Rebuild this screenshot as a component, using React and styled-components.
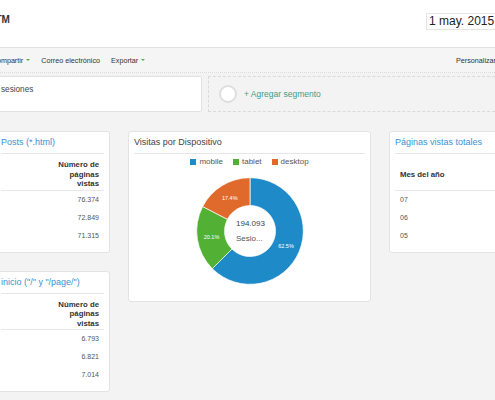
import React from 'react'
import styled, { createGlobalStyle } from 'styled-components'

const GlobalStyle = createGlobalStyle`
    html, body {
        margin: 0;
        padding: 0;
        background: #f3f3f3;
    }
    body {
        font-family: 'Liberation Sans', Arial, sans-serif;
        color: #333;
    }
`

const Viewport = styled.div`
    width: 495px;
    height: 400px;
    overflow: hidden;
    background: #f3f3f3;
`

const Header = styled.header`
    display: flex;
    align-items: flex-start;
    height: 47px;
    background: #ffffff;
    border-bottom: 1px solid #e2e2e2;
`

const Title = styled.h1`
    margin: 14px 0 0 -4.5px;
    font-size: 10px;
    line-height: 12px;
    font-weight: bold;
    color: #333;
`

const DateBox = styled.div`
    flex: 0 0 auto;
    width: 180px;
    height: 15px;
    margin: 13px -117px 0 auto;
    padding: 0 2px;
    border: 1px solid #e4e4e4;
    font-size: 12px;
    line-height: 15px;
    color: #222;
    white-space: nowrap;
    overflow: hidden;
`

const Toolbar = styled.nav`
    display: flex;
    align-items: center;
    height: 24px;
    background: #f5f5f5;
    border-bottom: 1px dotted #dcdcdc;
    font-size: 7.2px;
    color: #333;
    gap: 11px;
`

const ToolItem = styled.span`
    display: inline-flex;
    align-items: center;
    white-space: nowrap;
    margin-left: ${({ offset }) => offset || '0'};
    &:last-child {
        margin-left: auto;
        margin-right: -1px;
    }
`

const Caret = styled.i`
    display: inline-block;
    margin-left: 3px;
    border-left: 2px solid transparent;
    border-right: 2px solid transparent;
    border-top: 2.5px solid #5fae3e;
`

const SegmentRow = styled.div`
    display: flex;
    gap: 6px;
    padding-top: 3px;
`

const SegmentBox = styled.div`
    box-sizing: border-box;
    flex: 0 0 212px;
    height: 36px;
    margin-left: -10px;
    padding: 8px 0 0 10px;
    background: #fff;
    border: 1px solid #e2e2e2;
    border-radius: 2px;
    font-size: 8.2px;
    line-height: 10px;
    color: #444;
`

const AddSegment = styled.div`
    box-sizing: border-box;
    flex: 1;
    display: flex;
    align-items: center;
    gap: 7px;
    height: 36px;
    margin-right: -5px;
    padding-left: 10px;
    border: 1px dashed #dadada;
    font-size: 8.5px;
    color: #3f9d86;
`

const Ring = styled.span`
    box-sizing: border-box;
    width: 18px;
    height: 18px;
    border-radius: 50%;
    border: 2px solid #dedede;
    background: #fff;
`

const Grid = styled.main`
    display: grid;
    grid-template-columns: 115px 243px 243px;
    column-gap: 18px;
    align-items: start;
    margin-left: -5px;
    padding-top: 19px;
`

const Column = styled.div`
    display: flex;
    flex-direction: column;
    gap: 18px;
`

const Card = styled.section`
    box-sizing: border-box;
    padding: 0 5px ${({ bottom }) => bottom || '7px'};
    background: #fff;
    border: 1px solid #e3e3e3;
    border-radius: 3px;
`

const CardTitle = styled.h2`
    margin: 0;
    padding: 5px 0;
    font-size: 9px;
    line-height: 11px;
    font-weight: normal;
    white-space: nowrap;
    color: ${({ link }) => (link ? '#3b91d3' : '#444')};
    border-bottom: 1px solid #e6e6e6;
`

const Table = styled.table`
    width: 100%;
    border-collapse: collapse;
`

const Th = styled.th`
    box-sizing: border-box;
    height: 36px;
    padding: 5px 5px 0;
    font-size: 7.8px;
    line-height: 9.5px;
    font-weight: bold;
    color: #333;
    text-align: ${({ num }) => (num ? 'right' : 'left')};
    vertical-align: middle;
    width: ${({ w }) => w || 'auto'};
    border-bottom: 1px solid #e8e8e8;
`

const Td = styled.td`
    height: 18px;
    padding: 0 5px;
    font-size: 7px;
    line-height: 18px;
    color: #555;
    text-align: ${({ num }) => (num ? 'right' : 'left')};
    white-space: nowrap;
`

const Legend = styled.ul`
    display: flex;
    justify-content: center;
    gap: 10px;
    margin: 0;
    padding: 2px 0 0;
    list-style: none;
    font-size: 8px;
    line-height: 12px;
    color: #555;
`

const LegendItem = styled.li`
    display: flex;
    align-items: center;
    gap: 3px;
    &::before {
        content: '';
        width: 6px;
        height: 6px;
        background: ${({ color }) => color};
    }
`

const ChartWrap = styled.div`
    display: flex;
    justify-content: center;
    margin-top: 3px;
`

const devices = [
    { name: 'mobile', value: 62.5, color: '#1f8ac8' },
    { name: 'tablet', value: 20.1, color: '#52b135' },
    { name: 'desktop', value: 17.4, color: '#e06a2c' },
]

const pt = (a, r) => {
    const rad = (a * Math.PI) / 180
    return [60 + r * Math.sin(rad), 60 - r * Math.cos(rad)]
}

const slicePath = (a0, a1, R, r) => {
    const [x0, y0] = pt(a0, R)
    const [x1, y1] = pt(a1, R)
    const [x2, y2] = pt(a1, r)
    const [x3, y3] = pt(a0, r)
    const large = a1 - a0 > 180 ? 1 : 0
    return `M${x0} ${y0}A${R} ${R} 0 ${large} 1 ${x1} ${y1}L${x2} ${y2}A${r} ${r} 0 ${large} 0 ${x3} ${y3}Z`
}

const Donut = () => {
    let start = 0
    const slices = devices.map((d) => {
        const end = start + d.value * 3.6
        const mid = (start + end) / 2
        const s = { ...d, path: slicePath(start, end, 53.3, 25.5), label: pt(mid, 39) }
        start = end
        return s
    })
    return (
        <svg width="120" height="120" viewBox="0 0 120 120">
            {slices.map((s) => (
                <path key={s.name} d={s.path} fill={s.color} stroke="#fff" strokeWidth="0.7" />
            ))}
            {slices.map((s) => (
                <text
                    key={s.name + 'l'}
                    x={s.label[0]}
                    y={s.label[1] + 2}
                    fill="#fff"
                    fontSize="5.5"
                    textAnchor="middle"
                    fontFamily="Liberation Sans, Arial, sans-serif"
                >
                    {s.value.toFixed(1)}%
                </text>
            ))}
            <text x="46" y="54.5" fontSize="8" fill="#3b4450" fontFamily="Liberation Sans, Arial, sans-serif">
                194.093
            </text>
            <text x="46" y="70" fontSize="8" fill="#555" fontFamily="Liberation Sans, Arial, sans-serif">
                Sesio...
            </text>
        </svg>
    )
}

const PagesCard = ({ title, rows }) => (
    <Card>
        <CardTitle link>{title}</CardTitle>
        <Table>
            <thead>
                <tr>
                    <Th />
                    <Th num w="56px">
                        Número de páginas vistas
                    </Th>
                </tr>
            </thead>
            <tbody>
                {rows.map((v) => (
                    <tr key={v}>
                        <Td />
                        <Td num>{v}</Td>
                    </tr>
                ))}
            </tbody>
        </Table>
    </Card>
)

const months = [
    ['07', '98.512'],
    ['06', '91.204'],
    ['05', '87.630'],
]

export default function App() {
    return (
        <>
            <GlobalStyle />
            <Viewport>
                <Header>
                    <Title>TM</Title>
                    <DateBox>1 may. 2015 - 31 jul. 2015</DateBox>
                </Header>
                <Toolbar>
                    <ToolItem offset="-8.3px">
                        Compartir
                        <Caret />
                    </ToolItem>
                    <ToolItem>Correo electrónico</ToolItem>
                    <ToolItem>
                        Exportar
                        <Caret />
                    </ToolItem>
                    <ToolItem>Personalizar</ToolItem>
                </Toolbar>
                <SegmentRow>
                    <SegmentBox>sesiones</SegmentBox>
                    <AddSegment>
                        <Ring />
                        <span>+ Agregar segmento</span>
                    </AddSegment>
                </SegmentRow>
                <Grid>
                    <Column>
                        <PagesCard title="Posts (*.html)" rows={['76.374', '72.849', '71.315']} />
                        <PagesCard title={'inicio ("/" y "/page/")'} rows={['6.793', '6.821', '7.014']} />
                    </Column>
                    <Card bottom="10px">
                        <CardTitle>Visitas por Dispositivo</CardTitle>
                        <Legend>
                            {devices.map((d) => (
                                <LegendItem key={d.name} color={d.color}>
                                    {d.name}
                                </LegendItem>
                            ))}
                        </Legend>
                        <ChartWrap>
                            <Donut />
                        </ChartWrap>
                    </Card>
                    <Card>
                        <CardTitle link>Páginas vistas totales</CardTitle>
                        <Table>
                            <thead>
                                <tr>
                                    <Th>Mes del año</Th>
                                    <Th num w="56px">
                                        Número de páginas vistas
                                    </Th>
                                </tr>
                            </thead>
                            <tbody>
                                {months.map(([m, v]) => (
                                    <tr key={m}>
                                        <Td>{m}</Td>
                                        <Td num>{v}</Td>
                                    </tr>
                                ))}
                            </tbody>
                        </Table>
                    </Card>
                </Grid>
            </Viewport>
        </>
    )
}
